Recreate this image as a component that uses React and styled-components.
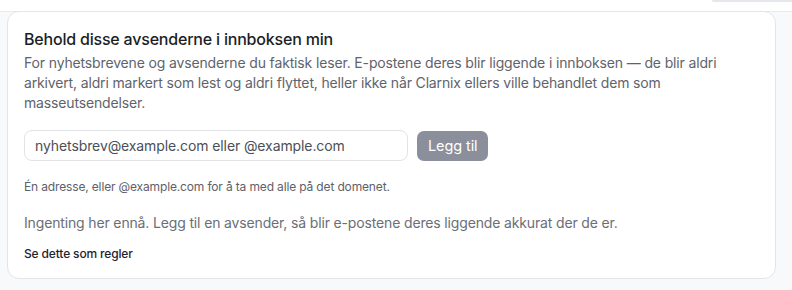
import React, { useState } from "react";
import styled, { createGlobalStyle } from "styled-components";

const GlobalStyle = createGlobalStyle`
  html, body {
    margin: 0;
    padding: 0;
    background: #f7f9fa;
  }
  body {
    font-family: Inter, "Noto Sans", "Liberation Sans", sans-serif;
    -webkit-font-smoothing: antialiased;
  }
`;

const Page = styled.div`
  width: 792px;
  height: 290px;
  overflow: hidden;
  background: #f7f9fa;
`;

const TopStrip = styled.div`
  height: 11px;
  border-bottom: 1px solid #e8eaed;
  background: #ffffff;
  display: flex;
  justify-content: flex-end;
  align-items: flex-start;
`;

const TopTab = styled.div`
  width: 80px;
  height: 2px;
  background: #e4e7eb;
  border-radius: 0 0 0 4px;
`;

const Body = styled.div`
  padding: 0 16px 0 7px;
  margin-top: -1px;
`;

const Card = styled.section`
  background: #ffffff;
  border: 1px solid #e3e5e8;
  border-radius: 12px;
  padding: 16px 16px 16px 16px;
  height: 268px;
  box-sizing: border-box;
  display: flex;
  flex-direction: column;
`;

const Title = styled.h3`
  margin: 0;
  font-size: 16px;
  line-height: 22px;
  font-weight: 500;
  color: #1b1e25;
  letter-spacing: -0.2px;
`;

const Lead = styled.p`
  margin: 3px 0 0;
  font-size: 14px;
  line-height: 20px;
  color: #5f636b;
  letter-spacing: -0.15px;
  max-width: 700px;
`;

const AddRow = styled.form`
  display: flex;
  gap: 9px;
  margin-top: 17px;
  align-items: center;
`;

const Input = styled.input`
  width: 384px;
  height: 31px;
  box-sizing: border-box;
  border: 1px solid #e1e3e7;
  border-radius: 8px;
  padding: 0 10px;
  font: inherit;
  font-size: 14px;
  color: #3c4048;
  letter-spacing: -0.1px;
  outline: none;
  &::placeholder {
    color: #4b4f57;
  }
`;

const Button = styled.button`
  height: 30px;
  padding: 0 11px;
  border: none;
  border-radius: 7px;
  background: ${(p) => (p.disabled ? "#8b8f9b" : "#2f3342")};
  color: #ffffff;
  font: inherit;
  font-size: 14.5px;
  letter-spacing: -0.1px;
  cursor: ${(p) => (p.disabled ? "default" : "pointer")};
`;

const Hint = styled.p`
  margin: 18px 0 0;
  font-size: 12px;
  line-height: 16px;
  color: #5d6169;
  letter-spacing: -0.15px;
`;

const Empty = styled.p`
  margin: 18px 0 0;
  font-size: 14px;
  line-height: 20px;
  color: #6a6e76;
  letter-spacing: -0.15px;
`;

const RulesLink = styled.a`
  margin-top: 13px;
  font-size: 12px;
  line-height: 16px;
  color: #1f2330;
  font-weight: 500;
  text-decoration: none;
  letter-spacing: -0.15px;
  cursor: pointer;
`;

export default function App() {
  const [value, setValue] = useState("");

  return (
    <>
      <GlobalStyle />
      <Page>
        <TopStrip>
          <TopTab />
        </TopStrip>
        <Body>
          <Card>
            <Title>Behold disse avsenderne i innboksen min</Title>
            <Lead>
              For nyhetsbrevene og avsenderne du faktisk leser. E-postene deres
              blir liggende i innboksen — de blir aldri arkivert, aldri markert
              som lest og aldri flyttet, heller ikke når Clarnix ellers ville
              behandlet dem som masseutsendelser.
            </Lead>
            <AddRow onSubmit={(e) => e.preventDefault()}>
              <Input
                value={value}
                onChange={(e) => setValue(e.target.value)}
                placeholder="nyhetsbrev@example.com eller @example.com"
              />
              <Button type="submit" disabled={!value.trim()}>
                Legg til
              </Button>
            </AddRow>
            <Hint>
              Én adresse, eller @example.com for å ta med alle på det domenet.
            </Hint>
            <Empty>
              Ingenting her ennå. Legg til en avsender, så blir e-postene deres
              liggende akkurat der de er.
            </Empty>
            <RulesLink>Se dette som regler</RulesLink>
          </Card>
        </Body>
      </Page>
    </>
  );
}
